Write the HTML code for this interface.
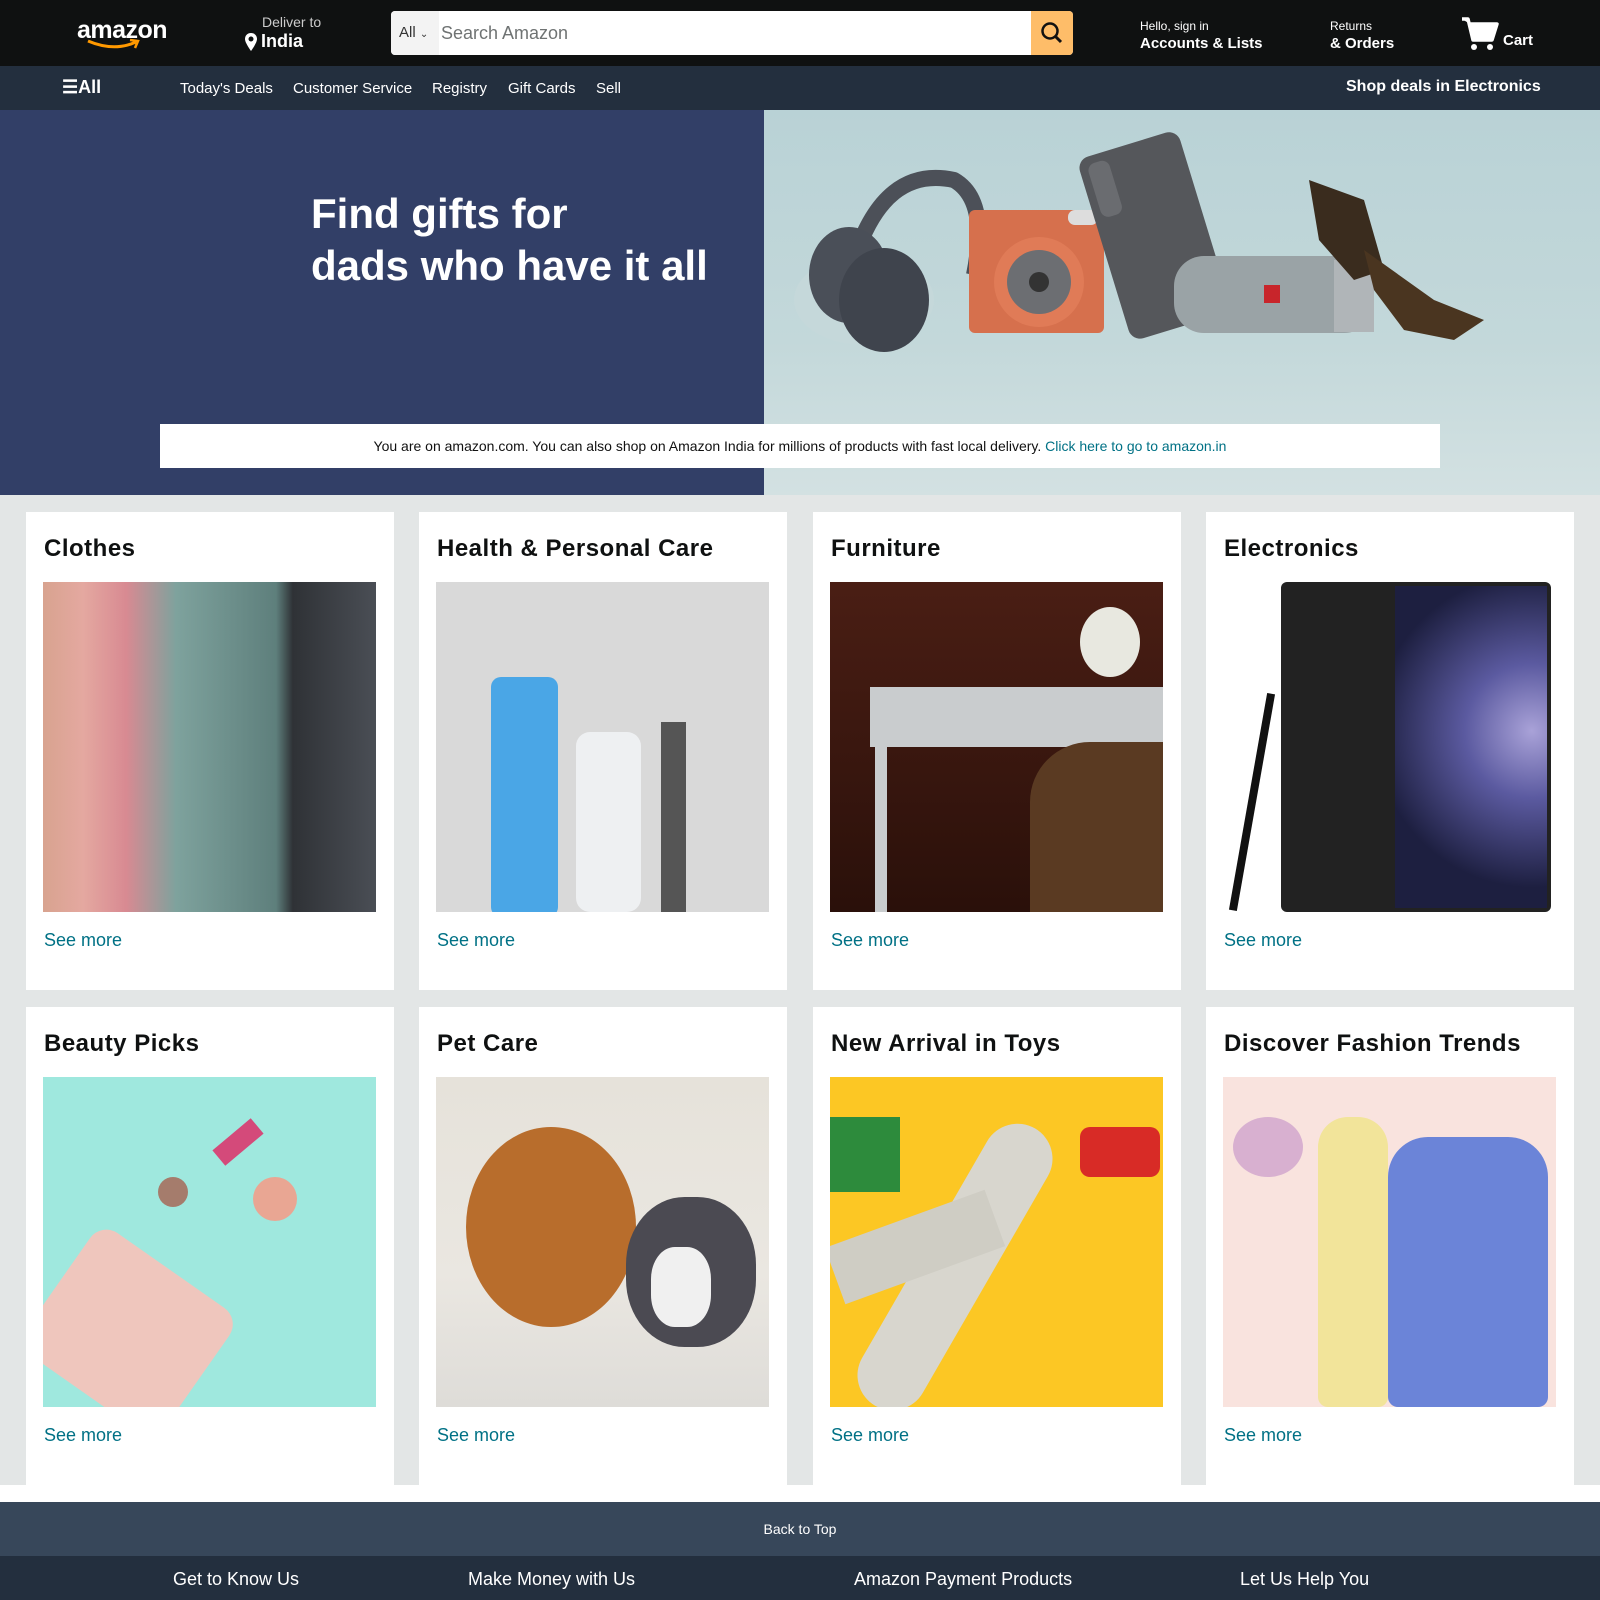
<!DOCTYPE html>
<html><head><meta charset="utf-8"><style>
*{margin:0;padding:0;box-sizing:border-box}
body{width:1600px;height:1600px;overflow:hidden;background:#e3e6e6;font-family:"Liberation Sans",Arial,sans-serif;position:relative}
.abs{position:absolute}
.hdr{left:0;top:0;width:1600px;height:66px;background:#0f1111;color:#fff}
.nav{left:0;top:66px;width:1600px;height:44px;background:#232f3e;color:#fff;font-size:15px}
.nav span{position:absolute;top:14px}
.card{background:#fff;width:368px;height:478px}
.card h2{position:absolute;left:18px;top:23px;font-size:24px;font-weight:bold;color:#0f1111;letter-spacing:.5px}
.card .im{position:absolute;left:17px;top:70px;width:333px;height:330px;overflow:hidden}
.card .sm{position:absolute;left:18px;top:418px;font-size:18px;color:#007185}
.ft{color:#fff;font-size:18px;top:1569px}
</style></head><body>
<div class="abs hdr">
 <div class="abs" style="left:77px;top:16px;font-size:25px;font-weight:bold;letter-spacing:-.5px">amazon</div>
 <svg class="abs" style="left:86px;top:38px" width="56" height="14"><path d="M2 3 Q28 14 50 4" stroke="#f90" stroke-width="3" fill="none"/><path d="M44 2 L52 3 L49 10" stroke="#f90" stroke-width="2.5" fill="none"/></svg>
 <div class="abs" style="left:262px;top:14px;font-size:14px;color:#ccc">Deliver to</div>
 <svg class="abs" style="left:244px;top:32px" width="14" height="20"><path d="M7 1 C3 1 1 4 1 7 C1 11 7 19 7 19 C7 19 13 11 13 7 C13 4 11 1 7 1Z" fill="#fff"/><circle cx="7" cy="7" r="2.5" fill="#0f1111"/></svg>
 <div class="abs" style="left:261px;top:31px;font-size:18px;font-weight:bold">India</div>
 <div class="abs" style="left:391px;top:11px;width:682px;height:44px;background:#fff;border-radius:4px;overflow:hidden">
  <div class="abs" style="left:0;top:0;width:48px;height:44px;background:#f3f3f3;color:#333;font-size:15px;padding:13px 0 0 8px">All <span style="font-size:10px">&#8964;</span></div>
  <div class="abs" style="left:50px;top:12px;font-size:18px;color:#6f7373">Search Amazon</div>
  <div class="abs" style="left:640px;top:0;width:42px;height:44px;background:#febd69"><svg width="42" height="44"><circle cx="19" cy="20" r="7.5" stroke="#111" stroke-width="2.5" fill="none"/><path d="M24.5 25.5 L30 31" stroke="#111" stroke-width="3"/></svg></div>
 </div>
 <div class="abs" style="left:1140px;top:19px;font-size:12px">Hello, sign in</div>
 <div class="abs" style="left:1140px;top:35px;font-size:15px;font-weight:bold">Accounts &amp; Lists</div>
 <div class="abs" style="left:1330px;top:19px;font-size:12px">Returns</div>
 <div class="abs" style="left:1330px;top:35px;font-size:15px;font-weight:bold">&amp; Orders</div>
 <svg class="abs" style="left:1460px;top:16px" width="40" height="36"><path d="M2 3 L8 3 L13 24 L32 24 L37 8 L10 8" stroke="#fff" stroke-width="3.5" fill="#fff" stroke-linejoin="round"/><circle cx="14" cy="31" r="3" fill="#fff"/><circle cx="30" cy="31" r="3" fill="#fff"/></svg>
 <div class="abs" style="left:1503px;top:32px;font-size:15px;font-weight:bold">Cart</div>
</div>
<div class="abs nav">
 <span style="left:62px;top:11px;font-size:18px;font-weight:bold">&#9776;All</span>
 <span style="left:180px">Today's Deals</span>
 <span style="left:293px">Customer Service</span>
 <span style="left:432px">Registry</span>
 <span style="left:508px">Gift Cards</span>
 <span style="left:596px">Sell</span>
 <span style="left:1346px;top:12px;font-size:16px;font-weight:bold">Shop deals in Electronics</span>
</div>
<div class="abs" style="left:0;top:110px;width:764px;height:385px;background:#323f67"></div>
<div class="abs" style="left:764px;top:110px;width:836px;height:385px;background:linear-gradient(180deg,#b9d2d6 0%,#c3d8da 60%,#d3e1e2 100%);overflow:hidden">
 <svg width="836" height="385">
  <ellipse cx="100" cy="190" rx="70" ry="45" fill="#c5d8da"/>
  <path d="M90 150 Q120 55 190 70 Q225 90 210 165" stroke="#4c5058" stroke-width="16" fill="none"/>
  <ellipse cx="85" cy="165" rx="40" ry="48" fill="#4a4f58"/>
  <ellipse cx="120" cy="190" rx="45" ry="52" fill="#3f444d"/>
  <rect x="205" y="100" width="135" height="123" rx="6" fill="#d6704d"/>
  <circle cx="275" cy="172" r="45" fill="#e07b57"/><circle cx="275" cy="172" r="32" fill="#6c6e72"/><circle cx="275" cy="172" r="10" fill="#333"/>
  <rect x="304" y="100" width="30" height="15" rx="7" fill="#ddd"/>
  <g transform="rotate(-17 393 132)"><rect x="340" y="30" width="105" height="190" rx="12" fill="#55575b"/><rect x="348" y="38" width="22" height="56" rx="8" fill="#6a6c70"/></g>
  <rect x="410" y="146" width="200" height="77" rx="30" fill="#9aa3a6"/>
  <rect x="570" y="150" width="40" height="72" fill="#b0b5b8"/>
  <rect x="500" y="175" width="16" height="18" fill="#c8252b"/>
  <path d="M545 70 L600 90 L620 160 L590 170 L555 130Z" fill="#3a2c1e"/>
  <path d="M600 140 L670 190 L720 210 L690 230 L640 220 L610 180Z" fill="#4a3520"/>
 </svg>
</div>
<div class="abs" style="left:311px;top:188px;color:#fff;font-size:42px;font-weight:bold;line-height:52px">Find gifts for<br>dads who have it all</div>
<div class="abs" style="left:160px;top:424px;width:1280px;height:44px;background:#fff;text-align:center;font-size:14px;padding-top:14px;color:#111">You are on amazon.com. You can also shop on Amazon India for millions of products with fast local delivery. <span style="color:#007185">Click here to go to amazon.in</span></div>

<div class="abs card" style="left:26px;top:512px"><h2>Clothes</h2><div class="im" style="background:linear-gradient(90deg,#d8a38f 0,#e4a8a0 12%,#d88a92 25%,#7ea29d 40%,#5e7f7c 70%,#2f3236 75%,#4a4e55 100%)"></div><div class="sm">See more</div></div>
<div class="abs card" style="left:419px;top:512px"><h2>Health &amp; Personal Care</h2><div class="im" style="background:#d9d9d9"><div class="abs" style="left:55px;top:95px;width:67px;height:240px;border-radius:10px;background:#4aa6e6"></div><div class="abs" style="left:140px;top:150px;width:65px;height:180px;border-radius:14px;background:#eef0f2"></div><div class="abs" style="left:225px;top:140px;width:25px;height:190px;background:#555"></div></div><div class="sm">See more</div></div>
<div class="abs card" style="left:813px;top:512px"><h2>Furniture</h2><div class="im" style="background:linear-gradient(180deg,#4a1e14,#2a100a)"><div class="abs" style="left:40px;top:105px;width:300px;height:60px;background:#c9ccce"></div><div class="abs" style="left:45px;top:160px;width:12px;height:170px;background:#c9ccce"></div><div class="abs" style="left:200px;top:160px;width:140px;height:170px;border-radius:60px 0 0 0;background:#5a3a22"></div><div class="abs" style="left:250px;top:25px;width:60px;height:70px;border-radius:50%;background:#e8e8e0"></div></div><div class="sm">See more</div></div>
<div class="abs card" style="left:1206px;top:512px"><h2>Electronics</h2><div class="im" style="background:#fff"><div class="abs" style="left:58px;top:0;width:270px;height:330px;background:#222;border-radius:6px"></div><div class="abs" style="left:172px;top:4px;width:152px;height:322px;background:radial-gradient(circle at 90% 45%,#a9a2d8 0,#5b5aa0 30%,#1d1f40 70%)"></div><div class="abs" style="left:25px;top:110px;width:8px;height:220px;background:#111;transform:rotate(10deg)"></div></div><div class="sm">See more</div></div>

<div class="abs card" style="left:26px;top:1007px"><h2>Beauty Picks</h2><div class="im" style="background:#9fe8de"><div class="abs" style="left:0;top:180px;width:170px;height:150px;background:#efc6bd;transform:rotate(35deg);border-radius:20px"></div><div class="abs" style="left:115px;top:100px;width:30px;height:30px;border-radius:50%;background:#a57c6c"></div><div class="abs" style="left:210px;top:100px;width:44px;height:44px;border-radius:50%;background:#e9a693"></div><div class="abs" style="left:185px;top:40px;width:20px;height:50px;background:#d44a7a;transform:rotate(50deg)"></div></div><div class="sm">See more</div></div>
<div class="abs card" style="left:419px;top:1007px"><h2>Pet Care</h2><div class="im" style="background:linear-gradient(180deg,#e6e2da 0,#eae7e1 60%,#dedcd8 100%)"><div class="abs" style="left:30px;top:50px;width:170px;height:200px;border-radius:50%;background:#b86d2c"></div><div class="abs" style="left:190px;top:120px;width:130px;height:150px;border-radius:45%;background:#4b4a52"></div><div class="abs" style="left:215px;top:170px;width:60px;height:80px;border-radius:40%;background:#f0f0f0"></div></div><div class="sm">See more</div></div>
<div class="abs card" style="left:813px;top:1007px"><h2>New Arrival in Toys</h2><div class="im" style="background:#fcc724"><div class="abs" style="left:90px;top:30px;width:70px;height:320px;background:#d8d6ce;border-radius:35px;transform:rotate(30deg)"></div><div class="abs" style="left:0;top:140px;width:170px;height:60px;background:#cfcdc4;transform:rotate(-20deg)"></div><div class="abs" style="left:0;top:40px;width:70px;height:75px;background:#2d8b3c"></div><div class="abs" style="left:250px;top:50px;width:80px;height:50px;background:#d82b26;border-radius:10px"></div></div><div class="sm">See more</div></div>
<div class="abs card" style="left:1206px;top:1007px"><h2>Discover Fashion Trends</h2><div class="im" style="background:#f9e3de"><div class="abs" style="left:95px;top:40px;width:70px;height:290px;background:#f2e49a;border-radius:30px 30px 10px 10px"></div><div class="abs" style="left:165px;top:60px;width:160px;height:270px;background:#6b84d8;border-radius:40px 40px 10px 10px"></div><div class="abs" style="left:10px;top:40px;width:70px;height:60px;border-radius:50%;background:#d8b0d0"></div></div><div class="sm">See more</div></div>

<div class="abs" style="left:0;top:1485px;width:1600px;height:17px;background:#fff"></div>
<div class="abs" style="left:0;top:1502px;width:1600px;height:54px;background:#37475a;color:#fff;text-align:center;font-size:14px;padding-top:19px">Back to Top</div>
<div class="abs" style="left:0;top:1556px;width:1600px;height:44px;background:#232f3e"></div>
<div class="abs ft" style="left:173px">Get to Know Us</div>
<div class="abs ft" style="left:468px">Make Money with Us</div>
<div class="abs ft" style="left:854px">Amazon Payment Products</div>
<div class="abs ft" style="left:1240px">Let Us Help You</div>
</body></html>
